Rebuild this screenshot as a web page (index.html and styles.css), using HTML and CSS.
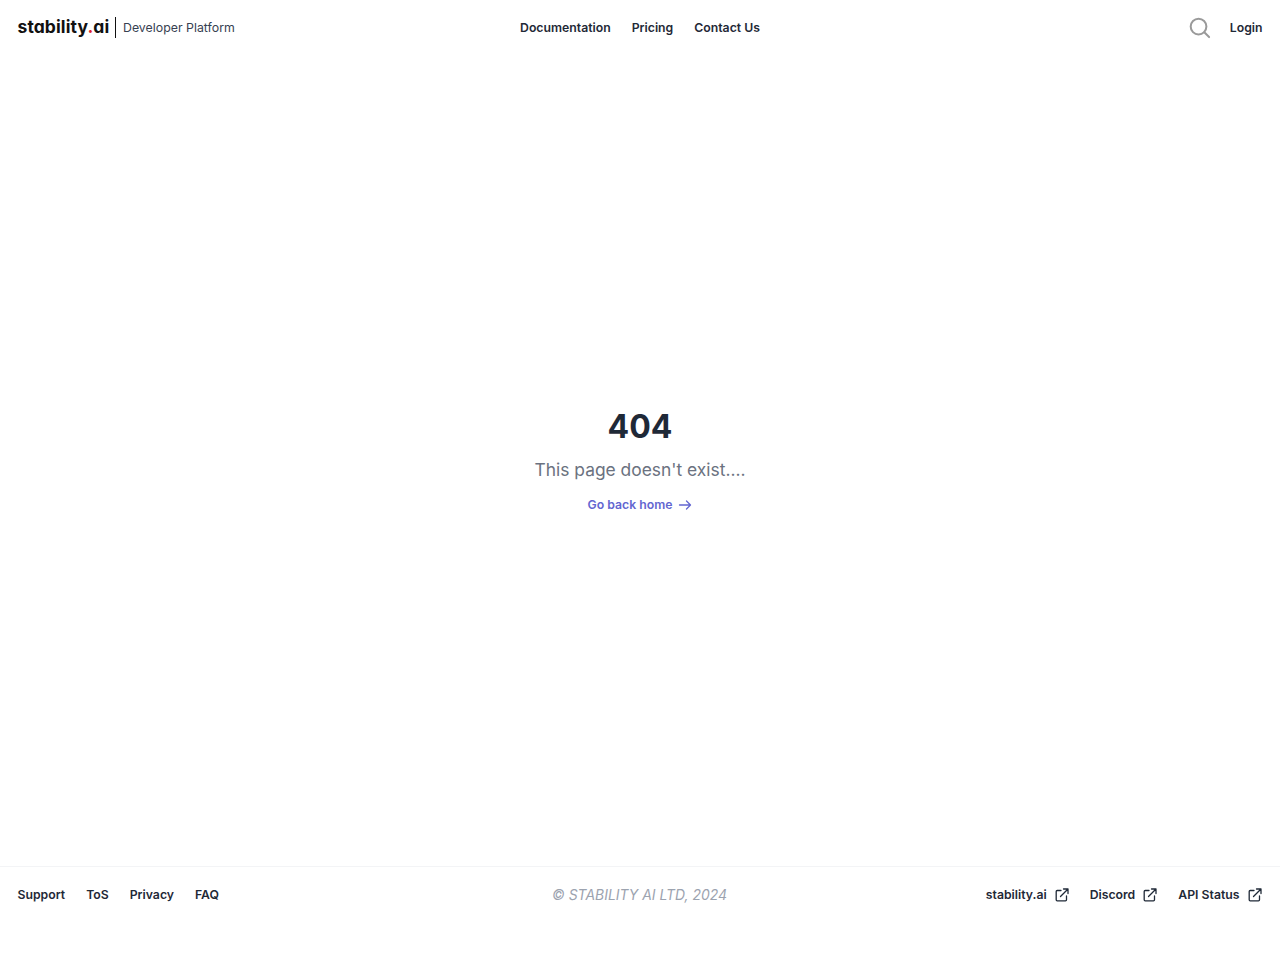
FILE: index.html
```html
<!DOCTYPE html>
<html lang="en">
<head>
  <meta charset="UTF-8" />
  <title>Stability AI - Developer Platform</title>
  <link rel="stylesheet" href="styles.css">
</head>

<body>
  <header class="topbar">
    <div class="brand">
      <a href="#" class="logo">stability<span class="dot">.</span>ai</a>
      <span class="brand-name">Developer Platform</span>
    </div>
    <nav class="topnav">
      <a href="#">Documentation</a>
      <a href="#">Pricing</a>
      <a href="#">Contact Us</a>
    </nav>
    <div class="actions">
      <svg class="search" viewBox="0 0 24 24" width="23" height="23" fill="none" stroke="#9a9a9a" stroke-width="2.100" stroke-linecap="round">
        <circle cx="11" cy="11" r="8.200"/>
        <path d="M17 17l5 5"/>
      </svg>
      <a href="#">Login</a>
    </div>
  </header>

  <main class="notfound">
    <h1>404</h1>
    <p>This page doesn't exist....</p>
    <a href="#" class="back">
      Go back home
      <svg viewBox="0 0 14 14" width="14" height="14" fill="none" stroke="currentColor" stroke-width="1.300" stroke-linecap="round" stroke-linejoin="round">
        <path d="M1.500 7h11M8.500 3l4 4-4 4"/>
      </svg>
    </a>
  </main>

  <footer class="bottombar">
    <nav class="links">
      <a href="#">Support</a>
      <a href="#">ToS</a>
      <a href="#">Privacy</a>
      <a href="#">FAQ</a>
    </nav>
    <div class="copy">© STABILITY AI LTD, 2024</div>
    <nav class="links links-right">
      <a href="#">stability.ai
        <svg viewBox="0 0 14 14" width="14" height="14" fill="none" stroke="currentColor" stroke-width="1.300" stroke-linecap="round" stroke-linejoin="round"><path d="M6 2.500H2.200a1 1 0 0 0-1 1v8.300a1 1 0 0 0 1 1h8.300a1 1 0 0 0 1-1V8M5.500 8.500L13 1M8.500 1H13v4.500"/></svg>
      </a>
      <a href="#">Discord
        <svg viewBox="0 0 14 14" width="14" height="14" fill="none" stroke="currentColor" stroke-width="1.300" stroke-linecap="round" stroke-linejoin="round"><path d="M6 2.500H2.200a1 1 0 0 0-1 1v8.300a1 1 0 0 0 1 1h8.300a1 1 0 0 0 1-1V8M5.500 8.500L13 1M8.500 1H13v4.500"/></svg>
      </a>
      <a href="#">API Status
        <svg viewBox="0 0 14 14" width="14" height="14" fill="none" stroke="currentColor" stroke-width="1.300" stroke-linecap="round" stroke-linejoin="round"><path d="M6 2.500H2.200a1 1 0 0 0-1 1v8.300a1 1 0 0 0 1 1h8.300a1 1 0 0 0 1-1V8M5.500 8.500L13 1M8.500 1H13v4.500"/></svg>
      </a>
    </nav>
  </footer>
</body>
</html>
```

FILE: styles.css
```css
* {margin: 0; padding: 0; box-sizing: border-box;}
body {
  font-family: Inter, "Liberation Sans", sans-serif;
  background: white;
  color: #1f2937;
  height: 960px;
  display: flex;
  flex-direction: column;
}
a {
  color: inherit;
  text-decoration: none;
}

.topbar {
  height: 55px;
  padding: 0 17.500px;
  display: grid;
  grid-template-columns: 1fr auto 1fr;
  align-items: center;
}
.brand {
  display: flex;
  align-items: center;
}
.logo {
  width: 97.500px;
  font-size: 17.500px;
  font-weight: 700;
  font-feature-settings: "cv11";
  color: #111;
  letter-spacing: 0.1px;
  line-height: 21px;
  padding-bottom: 2px;
}
.logo .dot {
  color: #e01e2e;
}
.brand-name {
  border-left: 1px solid #111;
  padding-left: 7px;
  font-size: 12.350px;
  line-height: 21px;
  color: #374151;
}
.topnav {
  display: flex;
  gap: 21px;
  font-size: 12.250px;
  font-weight: 600;
}
.actions {
  display: flex;
  justify-content: flex-end;
  align-items: center;
  gap: 19px;
  font-size: 12.250px;
  font-weight: 600;
}

.notfound {
  flex: 1;
  padding-top: 2px;
  display: flex;
  flex-direction: column;
  align-items: center;
  justify-content: center;
}
.notfound h1 {
  font-size: 32px;
  line-height: 36px;
  font-weight: 700;
}
.notfound p {
  margin-top: 13px;
  font-size: 17.400px;
  line-height: 24px;
  color: #6b7280;
}
.back {
  margin-top: 13px;
  display: flex;
  align-items: center;
  gap: 6px;
  font-size: 12.250px;
  line-height: 20px;
  font-weight: 600;
  color: #6366d1;
}

.bottombar {
  height: 94px;
  padding: 0 18.500px 38px 17.500px;
  border-top: 1px solid #f3f4f6;
  display: grid;
  grid-template-columns: 1fr auto 1fr;
  align-items: center;
}
.links {
  display: flex;
  gap: 21px;
  font-size: 12.250px;
  font-weight: 600;
}
.links-right {
  justify-content: flex-end;
}
.links-right a {
  display: flex;
  align-items: center;
  gap: 8px;
}
.copy {
  font-size: 13.950px;
  font-style: italic;
  color: #9ca3af;
}
```
